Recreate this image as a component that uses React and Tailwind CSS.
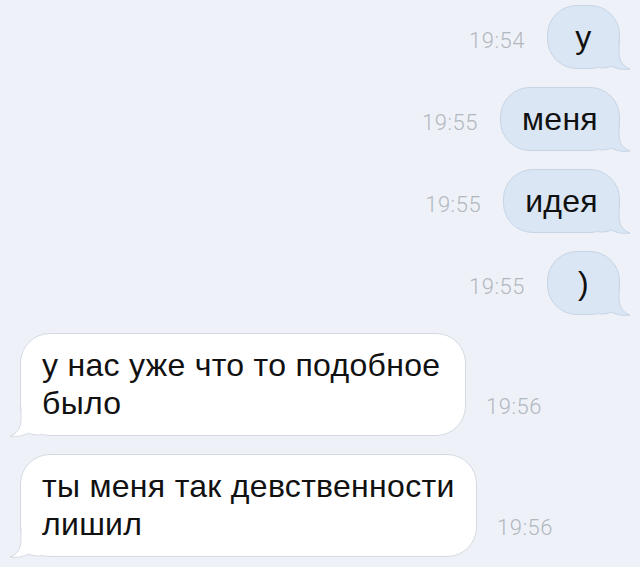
import React from 'react';

const outgoing = [
    { text: 'у', time: '19:54' },
    { text: 'меня', time: '19:55' },
    { text: 'идея', time: '19:55' },
    { text: ')', time: '19:55' },
];

const incoming = [
    { text: 'у нас уже что то подобное было', time: '19:56', width: 'w-[446px]' },
    { text: 'ты меня так девственности лишил', time: '19:56', width: 'w-[457px]' },
];

function Tail({ fill, stroke, flip }) {
    return (
        <svg
            className={
                'absolute bottom-[-2px] w-[32px] h-[30px] ' +
                (flip ? 'left-[-12px] -scale-x-100' : 'right-[-12px]')
            }
            viewBox="0 0 32 30"
        >
            <path
                d="M20 0 L20 12 C20 22 25 27 31 29 C25 30 18 29 12 26 C9 28 5 28 0 28 L0 0 Z"
                fill={fill}
            />
            <path
                d="M20 0 L20 12 C20 22 25 27 31 29 C25 30 18 29 12 26 C9 28 5 28 0 28"
                fill="none"
                stroke={stroke}
                strokeWidth="1"
            />
        </svg>
    );
}

function Time({ children, className }) {
    return (
        <span
            className={'text-[22px] leading-[26px] tracking-[0.5px] font-light text-[#b3b8bf] ' + (className || '')}
            style={{ fontFamily: 'Roboto, "Liberation Sans", sans-serif' }}
        >
            {children}
        </span>
    );
}

export default function App() {
    return (
        <div
            className="bg-[#eef2f8] w-[640px] h-[567px] overflow-hidden pt-[5px] flex flex-col gap-[18px]"
            style={{ fontFamily: '"Liberation Sans", Arial, sans-serif' }}
        >
            {outgoing.map((m, i) => (
                <div key={i} className="flex justify-end items-center gap-[22px] pr-[20px]">
                    <Time className="mt-[8px]">{m.time}</Time>
                    <div className="relative h-[64px] min-w-[73px] px-[21px] py-[12px] rounded-[30px] bg-[#dbe6f4] border border-[#c6d4e5] text-[32px] leading-[38px] tracking-[0.3px] text-[#111] text-center">
                        {m.text}
                        <Tail fill="#dbe6f4" stroke="#c6d4e5" />
                    </div>
                </div>
            ))}
            {incoming.map((m, i) => (
                <div key={i} className="flex items-end gap-[20px] pl-[20px]">
                    <div
                        className={
                            'relative h-[103px] pl-[21px] pr-[16px] pt-[12px] pb-[13px] rounded-[30px] bg-white border border-[#d5dae2] text-[32px] leading-[38px] tracking-[0.3px] text-[#111] ' +
                            m.width
                        }
                    >
                        {m.text}
                        <Tail fill="#ffffff" stroke="#d5dae2" flip />
                    </div>
                    <Time className="mb-[16px]">{m.time}</Time>
                </div>
            ))}
        </div>
    );
}
